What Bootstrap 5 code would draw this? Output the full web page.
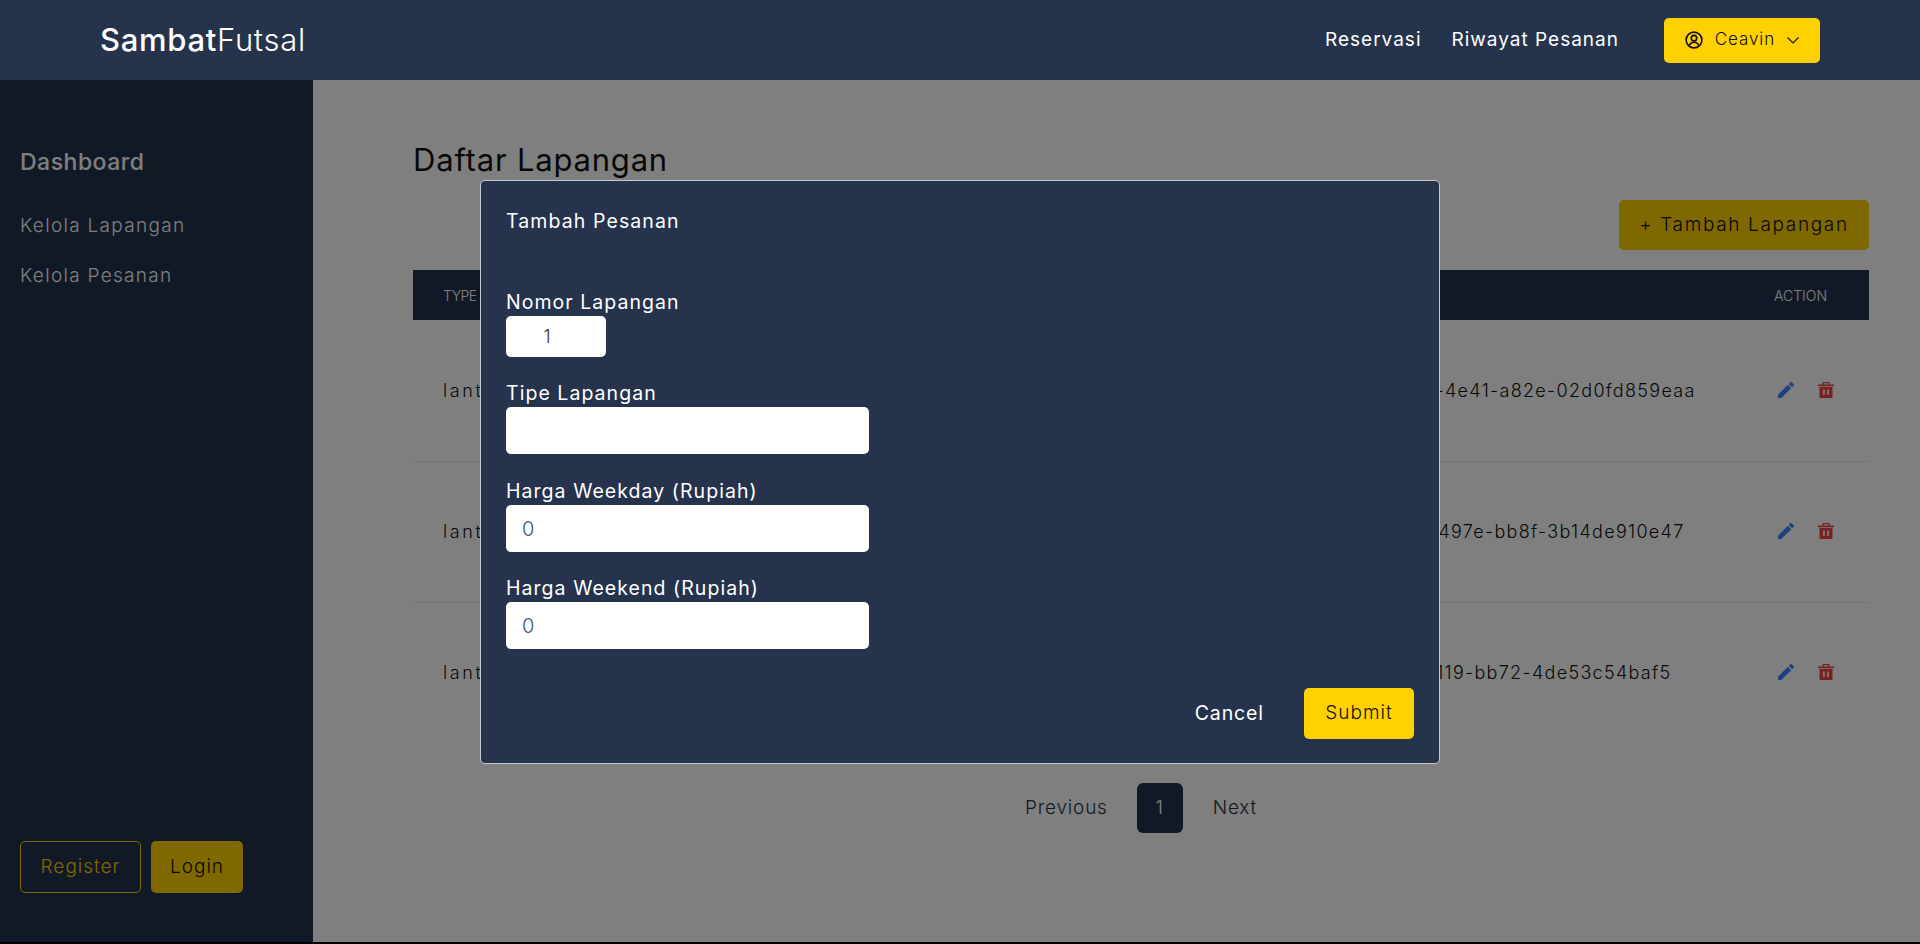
<!DOCTYPE html>
<html lang="id">
<head>
    <meta charset="UTF-8">
    <meta name="viewport" content="width=device-width, initial-scale=1.0">
    <title>SambatFutsal</title>
    <link rel="stylesheet" href="https://cdn.jsdelivr.net/npm/bootstrap@5.3.0/dist/css/bootstrap.min.css">
    <style>
        html, body { background: #000; height: 100%; }
        body { font-family: "Inter", "Liberation Sans", sans-serif; font-weight: 300; overflow: hidden; }
        .app-wrap { height: 942px; background: #fff; display: flex; flex-direction: column; }
        .top-bar { height: 80px; background: #25334d; padding: 0 100px; position: relative; z-index: 1060; flex: none; }
        .brand-name { font-size: 31px; color: #fff; font-weight: 300; padding: 0; margin: 0; letter-spacing: .7px; }
        .brand-name b { font-weight: 500; }
        .top-bar .nav-link { color: #fff; font-size: 19px; font-weight: 400; padding: 0; letter-spacing: 1px; }
        .nav-hist { margin: 0 45px 0 30px; }
        .user-btn { width: 156px; height: 45px; background: #ffd100; color: #111; border: 0; border-radius: 5px; font-size: 17px; font-weight: 300; letter-spacing: .9px; gap: 12px; }
        .user-btn:hover { background: #ffd100; color: #111; }
        .app-body { flex: 1; min-height: 0; }
        .side-bar { width: 313px; background: #25334d; padding: 66px 20px 49px; flex: none; }
        .side-title { font-size: 23px; font-weight: 500; color: #fff; line-height: 32px; margin-bottom: 34px; letter-spacing: .5px; }
        .side-link { display: block; font-size: 19px; color: #fff; line-height: 28px; margin-bottom: 22px; text-decoration: none; letter-spacing: 1.3px; }
        .btn-reg, .btn-log { height: 52px; font-size: 19px; font-weight: 300; border-radius: 5px; padding: 0; letter-spacing: 1px; }
        .btn-reg { width: 121px; border: 1px solid #ffd100; color: #ffd100; background: transparent; }
        .btn-log { width: 92px; border: 0; background: #ffd100; color: #111; }
        .side-btns { gap: 10px; }
        .main-area { padding: 60px 51px 0 100px; min-width: 0; flex: 1; }
        .page-title { font-size: 31px; font-weight: 400; line-height: 40px; margin: 0 0 20px; color: #111; letter-spacing: .8px; }
        .btn-add { width: 250px; height: 50px; padding: 0; background: #ffd100; color: #111; border: 0; border-radius: 5px; font-size: 19px; font-weight: 300; letter-spacing: 1.65px; }
        .field-table { table-layout: fixed; width: 1456px; margin: 20px 0 0; color: #111; }
        .field-table tr { border: 0; }
        .field-table thead th { background: #25334d; color: #fff; height: 50px; padding: 0 0 0 30px; font-size: 14px; font-weight: 300; vertical-align: middle; border: 0; }
        .field-table thead th:first-child { letter-spacing: -.5px; }
        .field-table tbody td { height: 141px; padding: 0 0 0 30px; font-size: 18px; font-weight: 300; vertical-align: middle; background: transparent; border-bottom: 1px solid #e5e7eb; color: #111; letter-spacing: 1.3px; }
        .field-table tbody td:first-child { letter-spacing: 2.6px; }
        .field-table tbody tr:last-child td { border-bottom: 0; }
        .field-table tbody td:last-child { padding-left: 34px; }
        .field-table tbody td svg { vertical-align: -1px; }
        .icon-edit { fill: #3b82f6; }
        .icon-trash { fill: #ef4444; }
        .pager-row { margin-top: 40px; }
        .pager-row .page-link { border: 0; background: transparent; color: #25334d; font-size: 19px; font-weight: 300; padding: 0; height: 50px; line-height: 50px; letter-spacing: .8px; }
        .pager-row .page-item:first-child .page-link { margin-right: 30px; }
        .pager-row .page-item:last-child .page-link { margin-left: 30px; }
        .pager-row .page-item.active .page-link { width: 46px; text-align: center; background: #25334d; color: #fff; border-radius: 6px; }
        .form-modal { max-width: 960px; margin: 180px auto 0; }
        .form-modal .modal-content { height: 584px; background: #25334d; border: 1px solid #c4c8d0; border-radius: 5px; color: #fff; padding: 24px 25px 24px 25px; }
        .form-head { font-size: 19.5px; font-weight: 400; line-height: 32px; margin-bottom: 51px; letter-spacing: 1.1px; }
        .form-label-s { display: block; font-size: 19.5px; font-weight: 400; line-height: 28px; margin: 0; letter-spacing: 1.05px; }
        .form-input { display: block; width: 363px; height: 47px; background: #fff; border: 0; border-radius: 5px; font-size: 20px; font-weight: 300; color: #40557f; padding: 0 16px; margin-bottom: 22px; outline: 0; }
        .form-input.input-no { width: 100px; height: 41px; font-size: 18px; text-align: center; padding: 0 18px 0 0; color: #333; }
        .form-input.input-tipe { margin-bottom: 23px; }
        .btn-cancel { color: #fff; background: transparent; border: 0; padding: 0; margin-right: 40px; font-size: 19.5px; font-weight: 400; letter-spacing: .9px; }
        .btn-cancel:hover { color: #fff; }
        .btn-submit { width: 110px; height: 51px; background: #ffd100; color: #111; border: 0; border-radius: 5px; font-size: 19px; font-weight: 300; padding: 0; letter-spacing: 1px; }
    </style>
</head>
<body>
    <div class="app-wrap">
        <!-- Navbar -->
        <nav class="navbar navbar-expand top-bar">
            <a class="navbar-brand brand-name" href="#"><b>Sambat</b>Futsal</a>
            <div class="d-flex align-items-center ms-auto">
                <a class="nav-link" href="#">Reservasi</a>
                <a class="nav-link nav-hist" href="#">Riwayat Pesanan</a>
                <button class="btn user-btn d-flex align-items-center justify-content-center" type="button">
                    <svg width="18" height="18" viewBox="0 0 24 24" fill="none" stroke="#111" stroke-width="2.2"><circle cx="12" cy="12" r="10.5"/><circle cx="12" cy="9.5" r="3.6"/><path d="M6 19c1-3 3.2-4 6-4s5 1 6 4"/></svg>
                    <span>Ceavin</span>
                    <svg width="12" height="12" viewBox="0 0 12 12" fill="none" stroke="#111" stroke-width="1.1"><path d="M.5 3.5 6 9l5.5-5.5"/></svg>
                </button>
            </div>
        </nav>

        <div class="d-flex app-body">
            <!-- Sidebar -->
            <aside class="side-bar d-flex flex-column">
                <div class="side-title">Dashboard</div>
                <a class="side-link" href="#">Kelola Lapangan</a>
                <a class="side-link" href="#">Kelola Pesanan</a>
                <div class="d-flex side-btns mt-auto">
                    <button class="btn btn-reg" type="button">Register</button>
                    <button class="btn btn-log" type="button">Login</button>
                </div>
            </aside>

            <!-- Konten -->
            <main class="main-area">
                <h1 class="page-title">Daftar Lapangan</h1>
                <div class="d-flex justify-content-end">
                    <button class="btn btn-add" type="button">+ Tambah Lapangan</button>
                </div>
                <table class="table field-table">
                    <colgroup><col style="width:293px"><col style="width:292px"><col style="width:264px"><col style="width:482px"><col style="width:125px"></colgroup>
                    <thead>
                        <tr><th>TYPE</th><th>WEEKDAY</th><th>WEEKEND</th><th>ID</th><th>ACTION</th></tr>
                    </thead>
                    <tbody id="fieldRows"></tbody>
                </table>
                <ul class="pagination justify-content-center pager-row">
                    <li class="page-item"><a class="page-link" href="#">Previous</a></li>
                    <li class="page-item active"><a class="page-link" href="#">1</a></li>
                    <li class="page-item"><a class="page-link" href="#">Next</a></li>
                </ul>
            </main>
        </div>
    </div>

    <!-- Modal tambah -->
    <div class="modal-backdrop show"></div>
    <div class="modal d-block" tabindex="-1">
        <div class="modal-dialog form-modal">
            <div class="modal-content">
                <div class="form-head">Tambah Pesanan</div>
                <label class="form-label-s">Nomor Lapangan</label>
                <input class="form-input input-no" type="text" value="1">
                <label class="form-label-s">Tipe Lapangan</label>
                <input class="form-input input-tipe" type="text">
                <label class="form-label-s">Harga Weekday (Rupiah)</label>
                <input class="form-input" type="text" value="0">
                <label class="form-label-s">Harga Weekend (Rupiah)</label>
                <input class="form-input" type="text" value="0">
                <div class="d-flex justify-content-end align-items-center mt-auto">
                    <button class="btn btn-cancel" type="button">Cancel</button>
                    <button class="btn btn-submit" type="button">Submit</button>
                </div>
            </div>
        </div>
    </div>

    <script src="https://cdn.jsdelivr.net/npm/bootstrap@5.3.0/dist/js/bootstrap.bundle.min.js"></script>
    <script>
        const rows = [
            { type: "lantai", weekday: "0", weekend: "0", id: "5a7c2e10-91bd-4e41-a82e-02d0fd859eaa" },
            { type: "lantai", weekday: "0", weekend: "0", id: "c11f6d14-2ea0-497e-bb8f-3b14de910e47" },
            { type: "lantai", weekday: "0", weekend: "0", id: "1f1a431-d1c2-4119-bb72-4de53c54baf5" }
        ];
        const editIcon = '<svg class="icon-edit me-4" width="16" height="16" viewBox="3 3 18 18"><path d="M3 17.25V21h3.75L17.81 9.94l-3.75-3.75L3 17.25zM20.71 7.04a1 1 0 0 0 0-1.41l-2.34-2.34a1 1 0 0 0-1.41 0l-1.83 1.83 3.75 3.75 1.83-1.83z"/></svg>';
        const trashIcon = '<svg class="icon-trash" width="16" height="16" viewBox="0 0 16 16"><path fill-rule="evenodd" d="M4.5 2.6V1.2C4.5.5 5 0 5.7 0h4.6c.7 0 1.2.5 1.2 1.2v1.4H16v1.7H0V2.6h4.5zm1.4 0h4.2V1.3H5.9v1.3zM1.5 5h13v9.7c0 .7-.6 1.3-1.3 1.3H2.8c-.7 0-1.3-.6-1.3-1.3V5zm3.6 2.5V13h1.7V7.5H5.1zm4.1 0V13h1.7V7.5H9.2z"/></svg>';
        document.getElementById("fieldRows").innerHTML = rows.map(r => `
            <tr><td>${r.type}</td><td>${r.weekday}</td><td>${r.weekend}</td><td>${r.id}</td><td>${editIcon}${trashIcon}</td></tr>
        `).join("");
    </script>
</body>
</html>
